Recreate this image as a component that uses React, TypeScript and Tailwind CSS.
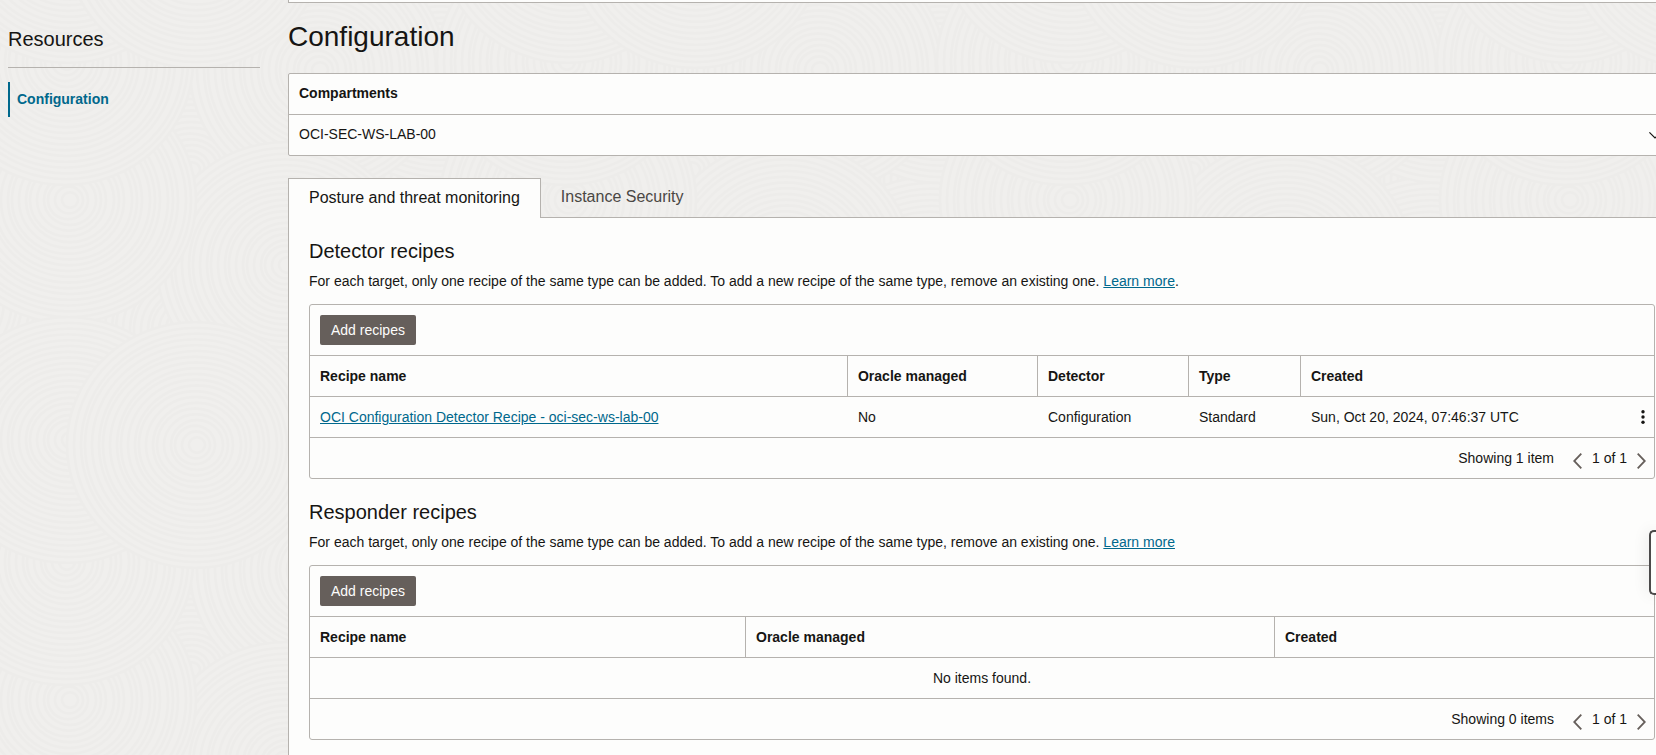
import React from "react";

const TILE = 500;

const rings = Array.from({ length: 21 }, (_, i) => 128 - i * 6);

// centres of the ring groups inside one tile, painted back to front
const swirls = [
  [190, 170],
  [440, 180],
  [430, 300],
  [190, 330],
  [318, 440],
  [440, 60],
  [318, 70],
  [285, 265],
  [68, 200],
  [65, 62],
  [68, 440],
  [195, 445],
];

// groups that cross a tile edge are repeated on the other side
const wrapped = swirls.flatMap(([x, y]) =>
  [-TILE, 0, TILE].flatMap((dx) => [-TILE, 0, TILE].map((dy) => [x + dx, y + dy]))
).filter(([x, y]) => x > -130 && x < TILE + 130 && y > -130 && y < TILE + 130);

function BackgroundTexture() {
  return (
    <svg className="absolute inset-0 h-full w-full" aria-hidden="true">
      <defs>
        <pattern id="swirls" width={TILE} height={TILE} patternUnits="userSpaceOnUse">
          <rect width={TILE} height={TILE} fill="#f0efed" />
          {wrapped.map(([x, y]) =>
            rings.map((r, i) => (
              <ellipse
                key={`${x}-${y}-${r}`}
                cx={x + (i % 3)}
                cy={y}
                rx={r}
                ry={r * 0.96}
                fill="#f0efed"
                stroke="#edecea"
                strokeWidth="2.4"
              />
            ))
          )}
        </pattern>
      </defs>
      <rect width="100%" height="100%" fill="url(#swirls)" />
    </svg>
  );
}

function Sidebar() {
  return (
    <aside className="w-[252px] shrink-0 pt-[25px]">
      <h2 className="border-b border-[#b5b2ae] pb-[14px] text-[20px] leading-7">Resources</h2>
      <nav className="mt-[14px]">
        <a
          href="#configuration"
          className="flex h-[35px] items-center border-l-2 border-[#00688c] pb-0.5 pl-[7px] font-bold text-[#00688c]"
        >
          Configuration
        </a>
      </nav>
    </aside>
  );
}

function Pager({ summary }: { summary: string }) {
  return (
    <div className="flex h-[41px] items-center justify-end border-t border-[#b5b2ae] pr-2">
      <span className="mr-[19px]">{summary}</span>
      <button type="button" aria-label="Previous page" className="mt-[5px] mr-[10px]">
        <svg width="9" height="16" viewBox="0 0 9 16" fill="none" stroke="#665f5b" strokeWidth="1.8">
          <path d="M8.3 0.7 1.2 8l7.1 7.3" />
        </svg>
      </button>
      <span>1 of 1</span>
      <button type="button" aria-label="Next page" className="mt-[5px] ml-[10px]">
        <svg width="9" height="16" viewBox="0 0 9 16" fill="none" stroke="#665f5b" strokeWidth="1.8">
          <path d="M0.7 0.7 7.8 8 0.7 15.3" />
        </svg>
      </button>
    </div>
  );
}

interface RecipeSectionProps {
  title: string;
  linkSuffix?: string;
  summary: string;
  children: React.ReactNode;
}

function RecipeSection({ title, linkSuffix, summary, children }: RecipeSectionProps) {
  return (
    <section className="pt-[19px]">
      <h2 className="text-[20px] leading-7">{title}</h2>
      <p className="mt-[6px]">
        For each target, only one recipe of the same type can be added. To add a new recipe of the same type, remove an
        existing one.{" "}
        <a href="#learn-more" className="text-[#00688c] underline">
          Learn more
        </a>
        {linkSuffix}
      </p>
      <div className="mt-[13px] rounded-[3px] border border-[#b5b2ae]">
        <div className="p-[10px]">
          <button type="button" className="block h-[30px] rounded-[2px] bg-[#665f5b] px-[11px] text-[#fdfdfc]">
            Add recipes
          </button>
        </div>
        {children}
        <Pager summary={summary} />
      </div>
    </section>
  );
}

const headCell = "h-[41px] border-t border-r border-[#b5b2ae] px-[10px] text-left font-bold";
const lastHeadCell = "h-[41px] border-t border-[#b5b2ae] px-[10px] text-left font-bold";
const bodyCell = "h-[41px] border-t border-[#b5b2ae] px-[10px]";

function DetectorTable() {
  return (
    <table className="w-full table-fixed border-separate border-spacing-0">
      <colgroup>
        <col />
        <col className="w-[190px]" />
        <col className="w-[151px]" />
        <col className="w-[112px]" />
        <col className="w-[333px]" />
        <col className="w-5" />
      </colgroup>
      <thead>
        <tr>
          <th className={headCell}>Recipe name</th>
          <th className={headCell}>Oracle managed</th>
          <th className={headCell}>Detector</th>
          <th className={headCell}>Type</th>
          <th className={lastHeadCell} colSpan={2}>
            Created
          </th>
        </tr>
      </thead>
      <tbody>
        <tr>
          <td className={bodyCell}>
            <a href="#recipe" className="text-[#00688c] underline">
              OCI Configuration Detector Recipe - oci-sec-ws-lab-00
            </a>
          </td>
          <td className={bodyCell}>No</td>
          <td className={bodyCell}>Configuration</td>
          <td className={bodyCell}>Standard</td>
          <td className={bodyCell}>Sun, Oct 20, 2024, 07:46:37 UTC</td>
          <td className="border-t border-[#b5b2ae]">
            <button type="button" aria-label="Actions" className="ml-[7px] block">
              <svg width="4" height="14" viewBox="0 0 4 14" fill="#161513">
                <circle cx="2" cy="1.8" r="1.7" />
                <circle cx="2" cy="7" r="1.7" />
                <circle cx="2" cy="12.2" r="1.7" />
              </svg>
            </button>
          </td>
        </tr>
      </tbody>
    </table>
  );
}

function ResponderTable() {
  return (
    <table className="w-full table-fixed border-separate border-spacing-0">
      <colgroup>
        <col className="w-[436px]" />
        <col />
        <col className="w-[379px]" />
      </colgroup>
      <thead>
        <tr>
          <th className={headCell}>Recipe name</th>
          <th className={headCell}>Oracle managed</th>
          <th className={lastHeadCell}>Created</th>
        </tr>
      </thead>
      <tbody>
        <tr>
          <td colSpan={3} className="h-[41px] border-t border-[#b5b2ae] text-center">
            No items found.
          </td>
        </tr>
      </tbody>
    </table>
  );
}

export default function App() {
  return (
    <div className="relative isolate flex min-h-screen gap-7 overflow-hidden bg-[#f0efed] pl-2 font-['Liberation_Sans',Arial,sans-serif] text-[14px] leading-5 text-[#161513]">
      <div className="absolute inset-0 -z-10">
        <BackgroundTexture />
      </div>

      <Sidebar />

      {/* the content column runs on past the right edge of the window */}
      <main className="-mr-5 flex min-w-0 flex-1 flex-col">
        <div className="h-[3px] border-x border-b border-[#b5b2ae] bg-[#fdfdfc]" />

        <h1 className="mt-4 text-[28px] leading-9">Configuration</h1>

        <div className="mt-[18px] rounded-[2px] border border-[#b5b2ae] bg-[#fdfdfc]">
          <label htmlFor="compartment" className="flex h-10 items-center px-[10px] pb-0.5 font-bold">
            Compartments
          </label>
          <div className="relative border-t border-[#b5b2ae]">
            <select id="compartment" className="block h-10 w-full appearance-none bg-transparent px-[10px] pb-0.5">
              <option>OCI-SEC-WS-LAB-00</option>
            </select>
            <svg
              className="pointer-events-none absolute top-[17px] right-[14px]"
              width="12"
              height="7"
              viewBox="0 0 12 7"
              fill="none"
              stroke="#161513"
              strokeWidth="1.2"
            >
              <path d="M0.4 0.4 6 6 11.6 0.4" />
            </svg>
          </div>
        </div>

        <div role="tablist" className="mt-[22px] flex h-[39px] text-[16px] leading-5">
          <button
            type="button"
            role="tab"
            aria-selected="true"
            className="z-10 -mb-px border border-b-0 border-[#b5b2ae] bg-[#fdfdfc] px-5 pb-0.5"
          >
            Posture and threat monitoring
          </button>
          <button type="button" role="tab" aria-selected="false" className="px-5 pb-0.5 text-[#4a4744]">
            Instance Security
          </button>
        </div>

        <div role="tabpanel" className="flex-1 border border-b-0 border-[#b5b2ae] bg-[#fdfdfc] px-5 pb-3">
          <RecipeSection title="Detector recipes" linkSuffix="." summary="Showing 1 item">
            <DetectorTable />
          </RecipeSection>
          <RecipeSection title="Responder recipes" summary="Showing 0 items">
            <ResponderTable />
          </RecipeSection>
        </div>
      </main>

      <button
        type="button"
        aria-label="Help"
        className="absolute top-[530px] right-0 z-20 h-[65px] w-[7px] rounded-l-[5px] border-2 border-r-0 border-[#4b4a4a] bg-[#fdfdfc] shadow-[0_0_16px_rgba(0,0,0,0.12)]"
      />
    </div>
  );
}
